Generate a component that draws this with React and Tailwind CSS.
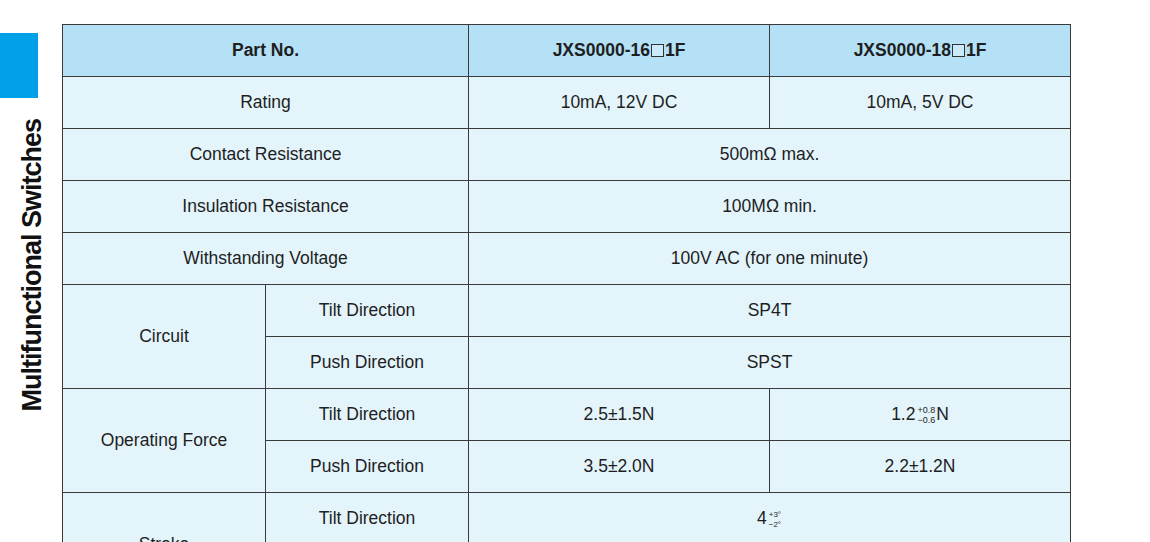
const Box = () => (
  <span className="inline-block w-[13px] h-[13px] border border-[#333] bg-white/30 align-[-1px] mx-[1px]" />
);

const Tol = ({ up, down, small }) => (
  <span
    className={`inline-flex flex-col align-middle leading-none ml-[2px] mr-[1px] ${
      small ? "text-[8px] gap-[2px]" : "text-[9px] gap-[1px]"
    }`}
  >
    <span>{up}</span>
    <span>{down}</span>
  </span>
);

const Td = ({ children, head, ...rest }) => (
  <td
    {...rest}
    className={`border-[1.5px] border-[#3a3a3a] text-center align-middle p-0 ${
      head ? "bg-[#b4e1f6] font-bold" : "bg-[#e3f4fb]"
    }`}
  >
    {children}
  </td>
);

export default function App() {
  return (
    <div
      className="w-[1150px] h-[542px] overflow-hidden bg-white flex text-[#1e1e1e]"
      style={{ fontFamily: '"Liberation Sans", Arial, sans-serif' }}
    >
      <div className="w-[62px] shrink-0 flex flex-col pt-[33px]">
        <div className="w-[38px] h-[65px] bg-[#00a0e9]" />
        <div className="mt-[21px] ml-[19px] [writing-mode:vertical-rl] rotate-180 text-[27px] tracking-[-1px] font-bold leading-[27px] text-[#111] whitespace-nowrap">
          Multifunctional Switches
        </div>
      </div>
      <div className="pt-[24px]">
        <table className="border-collapse table-fixed w-[1008px] text-[17.5px]">
          <colgroup>
            <col className="w-[203px]" />
            <col className="w-[203px]" />
            <col className="w-[301px]" />
            <col className="w-[301px]" />
          </colgroup>
          <tbody>
            <tr className="h-[52px]">
              <Td head colSpan={2}>Part No.</Td>
              <Td head>
                JXS0000-16<Box />1F
              </Td>
              <Td head>
                JXS0000-18<Box />1F
              </Td>
            </tr>
            <tr className="h-[52px]">
              <Td colSpan={2}>Rating</Td>
              <Td>10mA, 12V DC</Td>
              <Td>10mA, 5V DC</Td>
            </tr>
            <tr className="h-[52px]">
              <Td colSpan={2}>Contact Resistance</Td>
              <Td colSpan={2}>500mΩ max.</Td>
            </tr>
            <tr className="h-[52px]">
              <Td colSpan={2}>Insulation Resistance</Td>
              <Td colSpan={2}>100MΩ min.</Td>
            </tr>
            <tr className="h-[52px]">
              <Td colSpan={2}>Withstanding Voltage</Td>
              <Td colSpan={2}>100V AC (for one minute)</Td>
            </tr>
            <tr className="h-[52px]">
              <Td rowSpan={2}>Circuit</Td>
              <Td>Tilt Direction</Td>
              <Td colSpan={2}>SP4T</Td>
            </tr>
            <tr className="h-[52px]">
              <Td>Push Direction</Td>
              <Td colSpan={2}>SPST</Td>
            </tr>
            <tr className="h-[52px]">
              <Td rowSpan={2}>Operating Force</Td>
              <Td>Tilt Direction</Td>
              <Td>2.5±1.5N</Td>
              <Td>
                1.2<Tol up="+0.8" down="−0.6" />N
              </Td>
            </tr>
            <tr className="h-[52px]">
              <Td>Push Direction</Td>
              <Td>3.5±2.0N</Td>
              <Td>2.2±1.2N</Td>
            </tr>
            <tr className="h-[52px]">
              <Td rowSpan={2}>Stroke</Td>
              <Td>Tilt Direction</Td>
              <Td colSpan={2}>
                4<Tol small up="+3°" down="−2°" />
              </Td>
            </tr>
            <tr className="h-[52px]">
              <Td>Push Direction</Td>
              <Td colSpan={2}>0.25±0.1mm</Td>
            </tr>
          </tbody>
        </table>
      </div>
    </div>
  );
}
